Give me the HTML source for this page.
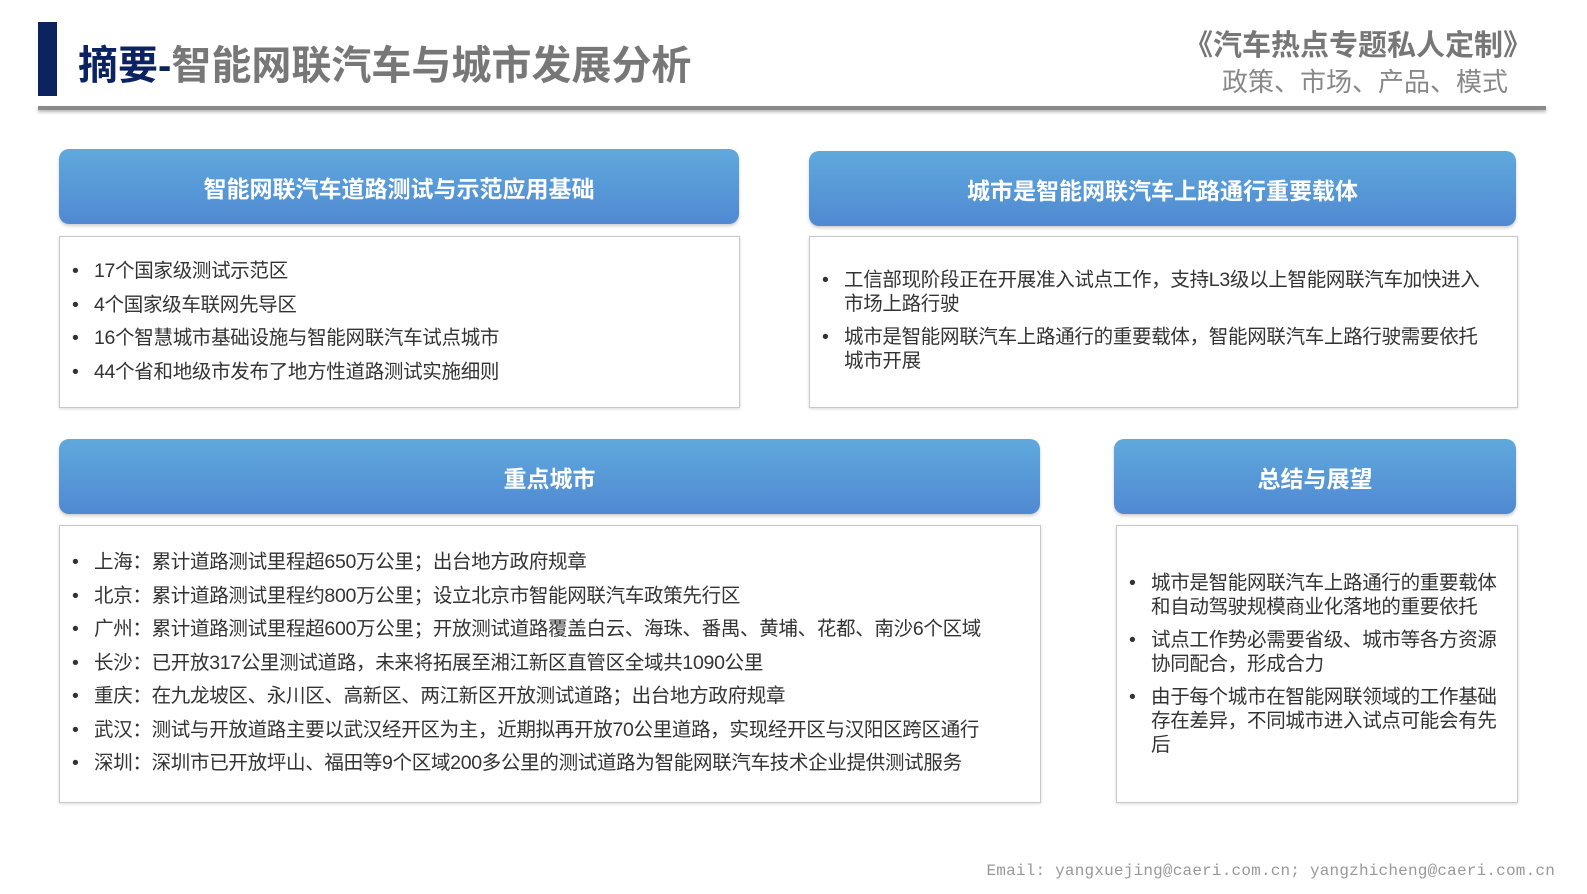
<!DOCTYPE html><html><head><meta charset="utf-8"><style>
*{margin:0;padding:0;box-sizing:border-box}
body{width:1587px;height:894px;background:#fff;position:relative;overflow:hidden;font-family:"Liberation Sans","Noto Sans CJK SC",sans-serif;color:#333}
.a{position:absolute}
.hd{position:absolute;border-radius:10px;background:linear-gradient(#5fa9dc,#5089d2);color:#fff;font-weight:bold;font-size:23px;display:flex;align-items:center;justify-content:center;box-shadow:0 2px 3px rgba(0,0,0,.2)}
.bd{position:absolute;border:1.5px solid #c8c8c8;box-shadow:0 1px 3px rgba(0,0,0,.15);background:#fff}
ul{list-style:none;font-size:19.5px}
li{position:relative;padding-left:34px;letter-spacing:-0.3px}
li:before{content:"•";position:absolute;left:12px;top:0}
.l1 li{line-height:33.5px}
.l2 li{line-height:24px;margin-bottom:9px}
</style></head><body>
<div class="a" style="left:38px;top:22px;width:19px;height:74px;background:#0b2360"></div>
<div class="a" style="left:78px;top:33px;font-size:40px;font-weight:bold;color:#777;white-space:nowrap"><span style="color:#0b2360">摘要-</span>智能网联汽车与城市发展分析</div>
<div class="a" style="right:55px;top:22px;font-size:29px;font-weight:bold;color:#777;white-space:nowrap">《汽车热点专题私人定制》</div>
<div class="a" style="right:79px;top:62px;font-size:26px;color:#888;white-space:nowrap">政策、市场、产品、模式</div>
<div class="a" style="left:38px;top:106px;width:1508px;height:4px;background:#8a8a8a;box-shadow:0 2px 3px rgba(0,0,0,.3)"></div>

<div class="hd" style="left:59px;top:149px;width:680px;height:75px">智能网联汽车道路测试与示范应用基础</div>
<div class="bd" style="left:59px;top:236px;width:681px;height:172px;padding-top:18px"><ul class="l1"><li>17个国家级测试示范区</li><li>4个国家级车联网先导区</li><li>16个智慧城市基础设施与智能网联汽车试点城市</li><li>44个省和地级市发布了地方性道路测试实施细则</li></ul></div>

<div class="hd" style="left:809px;top:151px;width:707px;height:75px">城市是智能网联汽车上路通行重要载体</div>
<div class="bd" style="left:809px;top:236px;width:709px;height:172px;padding-top:31px;padding-right:24px"><ul class="l2"><li>工信部现阶段正在开展准入试点工作，支持L3级以上智能网联汽车加快进入市场上路行驶</li><li>城市是智能网联汽车上路通行的重要载体，智能网联汽车上路行驶需要依托城市开展</li></ul></div>

<div class="hd" style="left:59px;top:439px;width:981px;height:75px">重点城市</div>
<div class="bd" style="left:59px;top:525px;width:982px;height:278px;padding-top:20px"><ul class="l1"><li>上海：累计道路测试里程超650万公里；出台地方政府规章</li><li>北京：累计道路测试里程约800万公里；设立北京市智能网联汽车政策先行区</li><li>广州：累计道路测试里程超600万公里；开放测试道路覆盖白云、海珠、番禺、黄埔、花都、南沙6个区域</li><li>长沙：已开放317公里测试道路，未来将拓展至湘江新区直管区全域共1090公里</li><li>重庆：在九龙坡区、永川区、高新区、两江新区开放测试道路；出台地方政府规章</li><li>武汉：测试与开放道路主要以武汉经开区为主，近期拟再开放70公里道路，实现经开区与汉阳区跨区通行</li><li>深圳：深圳市已开放坪山、福田等9个区域200多公里的测试道路为智能网联汽车技术企业提供测试服务</li></ul></div>

<div class="hd" style="left:1114px;top:439px;width:402px;height:75px">总结与展望</div>
<div class="bd" style="left:1116px;top:525px;width:402px;height:278px;padding-top:45px;padding-right:12px"><ul class="l2"><li>城市是智能网联汽车上路通行的重要载体和自动驾驶规模商业化落地的重要依托</li><li>试点工作势必需要省级、城市等各方资源协同配合，形成合力</li><li>由于每个城市在智能网联领域的工作基础存在差异，不同城市进入试点可能会有先后</li></ul></div>

<div class="a" style="right:32px;top:862px;font-size:16px;color:#999;font-family:'Liberation Mono','Noto Sans CJK SC',monospace;white-space:nowrap;letter-spacing:0.2px">Email: yangxuejing@caeri.com.cn; yangzhicheng@caeri.com.cn</div>
</body></html>
